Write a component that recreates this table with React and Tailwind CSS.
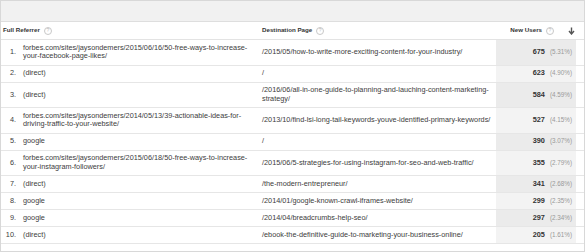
const rows = [
  {
    n: "1.",
    ref: ["forbes.com/sites/jaysondemers/2015/06/16/50-free-ways-to-increase-", "your-facebook-page-likes/"],
    dest: ["/2015/05/how-to-write-more-exciting-content-for-your-industry/"],
    users: "675",
    pct: "(5.31%)",
  },
  { n: "2.", ref: ["(direct)"], dest: ["/"], users: "623", pct: "(4.90%)" },
  {
    n: "3.",
    ref: ["(direct)"],
    dest: ["/2016/06/all-in-one-guide-to-planning-and-lauching-content-marketing-", "strategy/"],
    users: "584",
    pct: "(4.59%)",
  },
  {
    n: "4.",
    ref: ["forbes.com/sites/jaysondemers/2014/05/13/39-actionable-ideas-for-", "driving-traffic-to-your-website/"],
    dest: ["/2013/10/find-lsi-long-tail-keywords-youve-identified-primary-keywords/"],
    users: "527",
    pct: "(4.15%)",
  },
  { n: "5.", ref: ["google"], dest: ["/"], users: "390", pct: "(3.07%)" },
  {
    n: "6.",
    ref: ["forbes.com/sites/jaysondemers/2015/06/18/50-free-ways-to-increase-", "your-instagram-followers/"],
    dest: ["/2015/06/5-strategies-for-using-instagram-for-seo-and-web-traffic/"],
    users: "355",
    pct: "(2.79%)",
  },
  { n: "7.", ref: ["(direct)"], dest: ["/the-modern-entrepreneur/"], users: "341", pct: "(2.68%)" },
  { n: "8.", ref: ["google"], dest: ["/2014/01/google-known-crawl-iframes-website/"], users: "299", pct: "(2.35%)" },
  { n: "9.", ref: ["google"], dest: ["/2014/04/breadcrumbs-help-seo/"], users: "297", pct: "(2.34%)" },
  {
    n: "10.",
    ref: ["(direct)"],
    dest: ["/ebook-the-definitive-guide-to-marketing-your-business-online/"],
    users: "205",
    pct: "(1.61%)",
  },
];

function Help() {
  return (
    <span className="ml-[4px] inline-flex h-[8px] w-[8px] items-center justify-center rounded-full border border-[#c8c8c8] text-[5px] font-normal leading-none text-[#bbb]">
      ?
    </span>
  );
}

function Lines({ lines }) {
  return (
    <div className="flex flex-col">
      {lines.map((l, i) => (
        <span key={i} className="whitespace-nowrap">
          {l}
        </span>
      ))}
    </div>
  );
}

export default function App() {
  return (
    <div className="h-[252px] w-[585px] overflow-hidden bg-white font-['Liberation_Sans',Arial,sans-serif] text-[7.3px] leading-[8.5px] text-[#3c3c3c]">
      <div className="h-[252px] border border-[#d8d8d8]">
        <div className="h-[21px] border-b border-[#dedede] bg-[#f1f1f1]" />
        <div className="grid h-[18px] grid-cols-[20px_238px_237px_80px_1fr] items-center border-b border-[#e3e3e3] text-[6.2px] font-bold text-[#333]">
          <div className="col-span-2 flex items-center pl-[2px]">
            Full Referrer
            <Help />
          </div>
          <div className="flex items-center pl-[3px]">
            Destination Page
            <Help />
          </div>
          <div className="flex items-center justify-end pr-[1px]">
            New Users
            <Help />
            <svg className="ml-[14px]" width="7" height="8" viewBox="0 0 7 8">
              <path d="M3.5 0.5 V6.5 M1 4 L3.5 7 L6 4" stroke="#555" strokeWidth="1.4" fill="none" />
            </svg>
          </div>
          <div />
        </div>
        {rows.map((r, i) => (
          <div
            key={r.n}
            className="grid grid-cols-[20px_238px_237px_80px_1fr] border-b border-[#e6e6e6]"
          >
            <div className="flex items-center justify-end py-[3.75px] pr-[5px]">{r.n}</div>
            <div className="flex items-center py-[3.75px] pl-[2px]">
              <Lines lines={r.ref} />
            </div>
            <div className="flex items-center py-[3.75px] pl-[3px]">
              <Lines lines={r.dest} />
            </div>
            <div
              className={`flex items-center justify-end py-[3.75px] pr-[4px] ${
                i % 2 === 0 ? "bg-[#ebebeb]" : "bg-[#f3f3f3]"
              }`}
            >
              <span className="font-bold text-[#333]">{r.users}</span>
              <span className="ml-[5px] text-[6.3px] text-[#999]">{r.pct}</span>
            </div>
            <div />
          </div>
        ))}
      </div>
    </div>
  );
}
